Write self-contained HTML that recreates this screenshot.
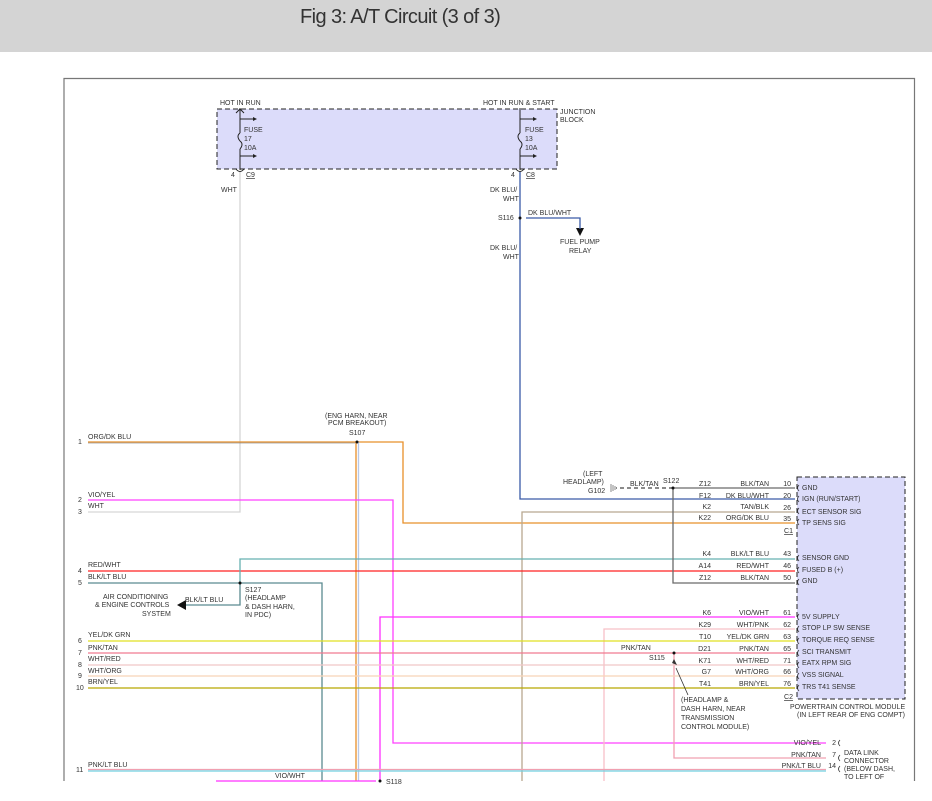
<!DOCTYPE html>
<html><head><meta charset="utf-8"><style>
html,body{margin:0;padding:0;background:#fff;width:932px;height:801px;overflow:hidden}
.hdr{position:absolute;left:0;top:0;width:932px;height:52px;background:#d4d4d4}
.hdr span{position:absolute;left:300px;top:6px;font:20px "Liberation Sans",sans-serif;color:#333;letter-spacing:-0.6px}
svg{position:absolute;left:0;top:0}
text{font-family:"Liberation Sans",sans-serif;font-size:7px;fill:#333}
</style></head><body>
<div class="hdr"><span>Fig 3: A/T Circuit (3 of 3)</span></div>
<svg width="932" height="801" viewBox="0 0 932 801">
<path d="M64 781V78.5H914.5V781" fill="none" stroke="#777" stroke-width="1.2"/>
<rect x="217" y="109" width="340" height="60" fill="#dcdcfa" stroke="#222" stroke-dasharray="5,3"/>
<text x="220" y="105">HOT IN RUN</text>
<text x="483" y="105">HOT IN RUN &amp; START</text>
<text x="560" y="114">JUNCTION</text><text x="560" y="122">BLOCK</text>
<g stroke="#222" stroke-width="1" fill="none">
<path d="M240 108V133M240 149V170M236 113l4-4 4 4M240 119H253M240 156H253M240 133q-4 3 0 8q4 3 0 8"/>
<path d="M520 108V133M520 149V170M520 119H533M520 156H533M520 133q-4 3 0 8q4 3 0 8"/>
<path d="M236 169q4 5 8 0M516 169q4 5 8 0"/>
</g>
<path d="M253 117l4 2-4 2zM253 154l4 2-4 2zM533 117l4 2-4 2zM533 154l4 2-4 2z" fill="#222"/>
<text x="244" y="132">FUSE</text><text x="244" y="141">17</text><text x="244" y="150">10A</text>
<text x="525" y="132">FUSE</text><text x="525" y="141">13</text><text x="525" y="150">10A</text>
<text x="231" y="177">4</text><text x="246" y="177" text-decoration="underline">C9</text>
<text x="511" y="177">4</text><text x="526" y="177" text-decoration="underline">C8</text>
<text x="221" y="192">WHT</text>
<text x="490" y="192">DK BLU/</text><text x="503" y="201">WHT</text>
<text x="498" y="220">S116</text><text x="528" y="215">DK BLU/WHT</text>
<text x="490" y="250">DK BLU/</text><text x="503" y="259">WHT</text>
<text x="560" y="244">FUEL PUMP</text><text x="569" y="253">RELAY</text>
<path d="M576 228h8l-4 8z" fill="#111"/>
<g fill="none" stroke-width="1.3">
<path d="M240 172V512H88" stroke="#d6d6d6"/>
<path d="M520 172V499H795M526 218H580V229" stroke="#3a5aa8"/>
<path d="M88 442H403V523H795" stroke="#e8902a"/>
<path d="M88 443H355" stroke="#666" stroke-width="0.6"/>
<path d="M356 442V781" stroke="#e8902a"/>
<path d="M358.5 442V781" stroke="#b8c8e8"/>
<path d="M88 500H393V743H826" stroke="#ff40ff"/>
<path d="M522 781V512H795" stroke="#b8a890"/>
<path d="M88 571H795" stroke="#ff2020"/>
<path d="M240 583V559H795" stroke="#66b0b0"/>
<path d="M88 583H322V781M240 583V605H186" stroke="#5a8a90"/>
<path d="M380 781V617H795" stroke="#ff30ff"/>
<path d="M604 781V629H795" stroke="#f8c0c8"/>
<path d="M88 641H795" stroke="#e0e020"/>
<path d="M88 653H795" stroke="#f07a90"/>
<path d="M674 653V758H826" stroke="#f0a0b0"/>
<path d="M88 665H795" stroke="#f0c8c8"/>
<path d="M88 676H795" stroke="#f8d4b8"/>
<path d="M88 688H795" stroke="#b8a800"/>
<path d="M673 488H795M673 488V583H795" stroke="#6a6a6a"/>
<path d="M673 488H616" stroke="#444" stroke-dasharray="4,3"/>
<path d="M88 769.5H826" stroke="#f0a0b0"/>
<path d="M88 771H826" stroke="#70d0e0"/>
<path d="M216 781H376" stroke="#ff30ff"/>
<path d="M676 668L688 695" stroke="#333" stroke-width="0.8"/>
</g>
<path d="M186 600l-9 5 9 5z" fill="#111"/>
<path d="M674 659l3 6-5-2z" fill="#333"/>
<g fill="#111"><circle cx="520" cy="218" r="1.5"/><circle cx="357" cy="442" r="1.5"/><circle cx="240" cy="583" r="1.5"/><circle cx="673" cy="488" r="1.5"/><circle cx="674" cy="653" r="1.5"/><circle cx="380" cy="781" r="1.5"/></g>
<path d="M611 484v8M613 485v6M615 486v4" stroke="#888" stroke-width="1"/>
<text x="78" y="444">1</text><text x="88" y="439">ORG/DK BLU</text>
<text x="78" y="502">2</text><text x="88" y="497">VIO/YEL</text>
<text x="78" y="514">3</text><text x="88" y="508">WHT</text>
<text x="78" y="573">4</text><text x="88" y="567">RED/WHT</text>
<text x="78" y="585">5</text><text x="88" y="579">BLK/LT BLU</text>
<text x="78" y="643">6</text><text x="88" y="637">YEL/DK GRN</text>
<text x="78" y="655">7</text><text x="88" y="650">PNK/TAN</text>
<text x="78" y="667">8</text><text x="88" y="661">WHT/RED</text>
<text x="78" y="678">9</text><text x="88" y="673">WHT/ORG</text>
<text x="76" y="690">10</text><text x="88" y="684">BRN/YEL</text>
<text x="76" y="772">11</text><text x="88" y="767">PNK/LT BLU</text>
<text x="275" y="778">VIO/WHT</text><text x="386" y="784">S118</text>
<text x="325" y="418">(ENG HARN, NEAR</text><text x="328" y="425">PCM BREAKOUT)</text><text x="349" y="435">S107</text>
<text x="103" y="599">AIR CONDITIONING</text><text x="95" y="607">&amp; ENGINE CONTROLS</text><text x="142" y="616">SYSTEM</text>
<text x="185" y="602">BLK/LT BLU</text>
<text x="245" y="592">S127</text><text x="245" y="600">(HEADLAMP</text><text x="245" y="609">&amp; DASH HARN,</text><text x="245" y="617">IN PDC)</text>
<text x="583" y="476">(LEFT</text><text x="563" y="484">HEADLAMP)</text><text x="588" y="493">G102</text>
<text x="630" y="486">BLK/TAN</text><text x="663" y="483">S122</text>
<text x="621" y="650">PNK/TAN</text><text x="649" y="660">S115</text>
<text x="681" y="702">(HEADLAMP &amp;</text><text x="681" y="711">DASH HARN, NEAR</text><text x="681" y="720">TRANSMISSION</text><text x="681" y="729">CONTROL MODULE)</text>
<g text-anchor="end">
<text x="711" y="486">Z12</text><text x="769" y="486">BLK/TAN</text><text x="791" y="486">10</text>
<text x="711" y="498">F12</text><text x="769" y="498">DK BLU/WHT</text><text x="791" y="498">20</text>
<text x="711" y="509">K2</text><text x="769" y="509">TAN/BLK</text><text x="791" y="510">26</text>
<text x="711" y="520">K22</text><text x="769" y="520">ORG/DK BLU</text><text x="791" y="521">35</text>
<text x="793" y="533" text-decoration="underline">C1</text>
<text x="711" y="556">K4</text><text x="769" y="556">BLK/LT BLU</text><text x="791" y="556">43</text>
<text x="711" y="568">A14</text><text x="769" y="568">RED/WHT</text><text x="791" y="568">46</text>
<text x="711" y="580">Z12</text><text x="769" y="580">BLK/TAN</text><text x="791" y="580">50</text>
<text x="711" y="615">K6</text><text x="769" y="615">VIO/WHT</text><text x="791" y="615">61</text>
<text x="711" y="627">K29</text><text x="769" y="627">WHT/PNK</text><text x="791" y="627">62</text>
<text x="711" y="639">T10</text><text x="769" y="639">YEL/DK GRN</text><text x="791" y="639">63</text>
<text x="711" y="651">D21</text><text x="769" y="651">PNK/TAN</text><text x="791" y="651">65</text>
<text x="711" y="663">K71</text><text x="769" y="663">WHT/RED</text><text x="791" y="663">71</text>
<text x="711" y="674">G7</text><text x="769" y="674">WHT/ORG</text><text x="791" y="674">66</text>
<text x="711" y="686">T41</text><text x="769" y="686">BRN/YEL</text><text x="791" y="686">76</text>
<text x="793" y="699" text-decoration="underline">C2</text>
<text x="821" y="745">VIO/YEL</text><text x="836" y="745">2</text>
<text x="821" y="757">PNK/TAN</text><text x="836" y="757">7</text>
<text x="821" y="768">PNK/LT BLU</text><text x="836" y="768">14</text>
</g>
<rect x="797" y="477" width="108" height="222" fill="#dcdcfa" stroke="#222" stroke-dasharray="5,3"/>
<g fill="none" stroke="#333" stroke-width="0.8">
<path d="M799 485q-3 3 0 6M799 496q-3 3 0 6M799 508q-3 3 0 6M799 519q-3 3 0 6M799 555q-3 3 0 6M799 567q-3 3 0 6M799 579q-3 3 0 6M799 614q-3 3 0 6M799 626q-3 3 0 6M799 638q-3 3 0 6M799 650q-3 3 0 6M799 662q-3 3 0 6M799 673q-3 3 0 6M799 685q-3 3 0 6"/>
<path d="M840 740q-3 3 0 6M840 755q-3 3 0 6M840 766q-3 3 0 6"/>
</g>
<text x="802" y="490">GND</text><text x="802" y="501">IGN (RUN/START)</text><text x="802" y="514">ECT SENSOR SIG</text><text x="802" y="525">TP SENS SIG</text>
<text x="802" y="560">SENSOR GND</text><text x="802" y="572">FUSED B (+)</text><text x="802" y="583">GND</text>
<text x="802" y="619">5V SUPPLY</text><text x="802" y="630">STOP LP SW SENSE</text><text x="802" y="642">TORQUE REQ SENSE</text><text x="802" y="654">SCI TRANSMIT</text><text x="802" y="665">EATX RPM SIG</text><text x="802" y="677">VSS SIGNAL</text><text x="802" y="689">TRS T41 SENSE</text>
<text x="790" y="709">POWERTRAIN CONTROL MODULE</text><text x="797" y="717">(IN LEFT REAR OF ENG COMPT)</text>
<text x="844" y="755">DATA LINK</text><text x="844" y="763">CONNECTOR</text><text x="844" y="771">(BELOW DASH,</text><text x="844" y="779">TO LEFT OF</text>
</svg>
</body></html>
